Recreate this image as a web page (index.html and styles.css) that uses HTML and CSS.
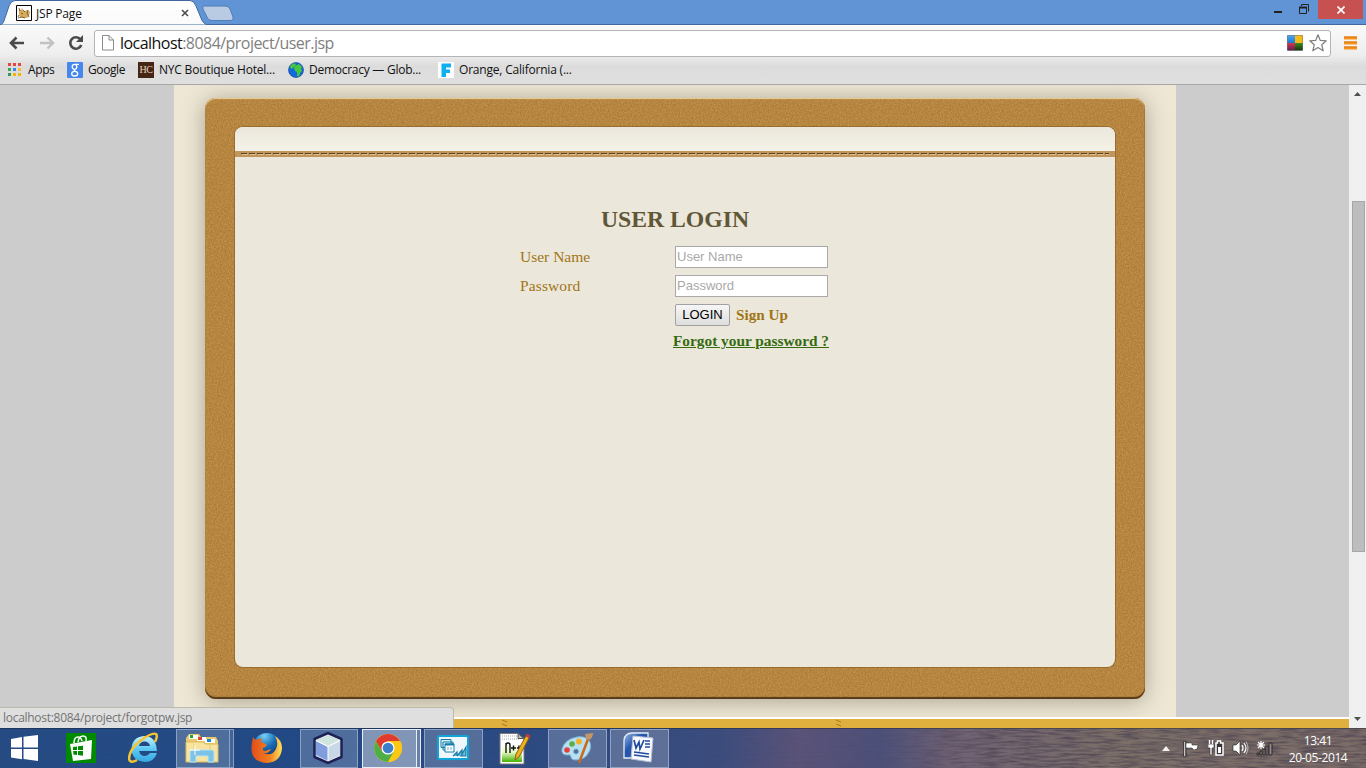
FILE: index.html
```html
<!DOCTYPE html>
<html lang="en">
<head>
<meta charset="utf-8">
<title>JSP Page</title>
<link rel="stylesheet" href="styles.css">
</head>
<body>
<div class="screen">
  <header class="tabstrip">
    <svg class="tab-shapes" width="250" height="25" viewBox="0 0 250 25">
      <defs><linearGradient id="tabg" x2="0" y2="1"><stop stop-color="#fff"/><stop offset="1" stop-color="#fafafa"/></linearGradient></defs>
      <path d="M0 25C4 24 4 20 6 15L9 6Q11 .5 15 .5H190Q194 .5 196 6L201 18Q203 24 208 25Z" fill="url(#tabg)" stroke="#40689f"/>
      <path d="M204 6H225Q229 6 230 9L233 17Q234 20 231 20.500H212Q208 20.500 207 17L203 9Q202 6 204 6Z" fill="#b8cbe2" stroke="#517eb8"/>
    </svg>
    <div class="tab">
      <svg width="16" height="16" viewBox="0 0 16 16"><path d="M.5.500h15v15H.5z" fill="#fff" stroke="#000"/><path d="M3 4l2 1 1-2 2 3 4-1 2 2-1 4-2 2H7l-3-1-1-2z" fill="#d9ab5c"/><path d="M3 3l1 3M7 5l2 2M5 8l2 1M12 5l-1 3 2 4M2 13l4-1 3 1M3 10l-1 2" stroke="#5b4a2b" stroke-width=".8" fill="none"/></svg>
      <span class="tab-title">JSP Page</span>
      <svg class="tab-x" width="8" height="8" viewBox="0 0 8 8"><path d="M1 1l6 6M7 1L1 7" stroke="#4c4c4c" stroke-width="1.600"/></svg>
    </div>
    <div class="window-controls">
      <svg class="min" width="8" height="2"><path d="M0 0h8v2H0z" fill="#222"/></svg>
      <svg class="restore" width="10" height="10" viewBox="0 0 10 10"><path d="M.5 3.500h7v6h-7zM2.500 2V.5h7v7" fill="none" stroke="#222"/><path d="M0 2.500h8v2H0z" fill="#222"/></svg>
      <span class="close"><svg width="8" height="8" viewBox="0 0 8 8"><path d="M.5.500l7 7M7.500.500l-7 7" stroke="#fff" stroke-width="1.700"/></svg></span>
    </div>
  </header>
  <div class="chrome">
    <div class="toolbar">
      <svg width="16" height="14" viewBox="0 0 16 14"><path d="M15 7H2M7.500 1.500L2 7l5.500 5.500" fill="none" stroke="#4b4b4b" stroke-width="2.600"/></svg>
      <svg class="forward" width="16" height="14" viewBox="0 0 16 14"><path d="M1 7h13M8.500 1.500L14 7l-5.500 5.500" fill="none" stroke="#c2c2c2" stroke-width="2.400"/></svg>
      <svg class="reload" width="16" height="16" viewBox="0 0 16 16"><path d="M12.500 4.500A5.700 5.700 0 1 0 13.300 10" fill="none" stroke="#4b4b4b" stroke-width="2.600"/><path d="M15 0v7H8z" fill="#4b4b4b"/></svg>
      <div class="omnibox">
        <svg width="12" height="16" viewBox="0 0 12 16"><path d="M.5.500H7l4.500 4.500v10H.5zM7 .5V5h4.500" fill="#fff" stroke="#8b8b8b"/></svg>
        <span class="url"><b>localhost</b>:8084/project/user.jsp</span>
        <svg class="plugin" width="16" height="16" viewBox="0 0 16 16"><defs><linearGradient id="pa" x2="0" y2="1"><stop stop-color="#4fa4ed"/><stop offset="1" stop-color="#1d78c9"/></linearGradient><linearGradient id="pb" x2="0" y2="1"><stop stop-color="#d83554"/><stop offset="1" stop-color="#66204f"/></linearGradient><linearGradient id="pc" x2="0" y2="1"><stop stop-color="#3c8c22"/><stop offset="1" stop-color="#173e0a"/></linearGradient></defs><rect width="16" height="16" rx="1" fill="#777"/><path d="M.5.500H8V8H.5z" fill="url(#pa)"/><path d="M8 .5h7.500V8H8z" fill="#f5bb16"/><path d="M.5 8H8v7H.5z" fill="url(#pb)"/><path d="M8 8h7.500v7H8z" fill="url(#pc)"/></svg>
        <svg width="18" height="18" viewBox="0 0 18 18"><path d="M9 .8l2.300 5.600 6 .4-4.500 4 1.400 6L9 13.600l-5.200 3.200 1.400-6-4.500-4 6-.4z" fill="#fff" stroke="#7d7d7d" stroke-width="1.200" stroke-linejoin="round"/></svg>
      </div>
      <svg class="menu" width="13" height="14" viewBox="0 0 13 14"><path d="M0 2h13M0 7h13M0 12h13" stroke="#f7941d" stroke-width="3"/><path d="M0 1h13M0 6h13M0 11h13" stroke="#dc7410"/></svg>
    </div>
    <nav class="bookmarks">
      <a class="bm b1"><svg width="13" height="13" viewBox="0 0 13 13"><path d="M0 0h3v3H0zM5 0h3v3H5zM10 0h3v3h-3z" fill="#e8453c"/><path d="M0 5h3v3H0z" fill="#3aa757"/><path d="M5 5h3v3H5z" fill="#3d82f0"/><path d="M10 5h3v3h-3z" fill="#f9bb2d"/><path d="M0 10h3v3H0z" fill="#2f9a51"/><path d="M5 10h3v3H5zM10 10h3v3h-3z" fill="#f5b400"/></svg><span>Apps</span></a>
      <a class="bm b2"><svg width="16" height="16" viewBox="0 0 16 16"><rect width="16" height="16" rx="1" fill="#4787ed"/><ellipse cx="7.500" cy="4.800" rx="2.300" ry="2.500" fill="none" stroke="#fff" stroke-width="1.300"/><ellipse cx="7.700" cy="11.700" rx="3" ry="2.300" fill="none" stroke="#fff" stroke-width="1.300"/><path d="M8 2.300h4M8 7.200q-2 1 .5 2.200" fill="none" stroke="#fff" stroke-width="1.200"/></svg><span>Google</span></a>
      <a class="bm b3"><i class="hc">HC</i><span>NYC Boutique Hotel...</span></a>
      <a class="bm b4"><svg width="16" height="16" viewBox="0 0 16 16"><circle cx="8" cy="8" r="7.500" fill="#1467df"/><path d="M2 4l3-3 3 1-1 2-2 2-2 1zM7 4l4-2 3 3-1 2 1 2-2 2-1 4-2-1V10L7 9 6 6z" fill="#46c83c"/><circle cx="8" cy="8" r="7.500" fill="none" stroke="#134590" stroke-opacity=".6"/></svg><span>Democracy — Glob...</span></a>
      <a class="bm b5"><svg width="16" height="16" viewBox="0 0 16 16"><path d="M0 0h16v16H0z" fill="#fff"/><path d="M3.500 1.500H13v4H8v2h4v3.500H8v4H3.500z" fill="#0fb0f0"/></svg><span>Orange, California (...</span></a>
    </nav>
  </div>
  <div class="viewport">
    <div class="page">
      <div class="page-center">
        <div class="board">
          <svg class="grain" width="940" height="601"><filter id="cork" x="0" y="0" width="100%" height="100%" color-interpolation-filters="sRGB"><feTurbulence type="fractalNoise" baseFrequency=".65" numOctaves="2" seed="3"/><feColorMatrix values=".17 0 0 0 .63  .17 0 0 0 .44  .15 0 0 0 .18  0 0 0 0 1"/></filter><rect width="940" height="601" filter="url(#cork)"/></svg>
          <main class="sheet">
            <div class="sheet-top"></div>
            <div class="stitch"><svg width="868" height="3"><path d="M0 .5h868" stroke="#5c4120" stroke-dasharray="6 2"/><path d="M1 1.500h868" stroke="#dfc28f" stroke-dasharray="6 2"/></svg></div>
            <form class="login">
              <h2>USER LOGIN</h2>
              <label>User Name</label><input type="text" placeholder="User Name">
              <label class="pw">Password</label><input type="password" placeholder="Password">
              <div class="actions"><button type="button">LOGIN</button><a>Sign Up</a></div>
              <a class="forgot">Forgot your password ?</a>
            </form>
          </main>
        </div>
      </div>
      <div class="gold">
        <svg class="m1" width="8" height="8"><path d="M1 1l5 2M1 5l5 2" stroke="#a67a16"/></svg>
        <svg class="m2" width="8" height="8"><path d="M1 1l5 2M1 5l5 2" stroke="#a67a16"/></svg>
      </div>
      <div class="status">localhost:8084/project/forgotpw.jsp</div>
    </div>
    <div class="scrollbar">
      <svg width="7" height="4"><path d="M0 4L3.500 0 7 4z" fill="#505050"/></svg>
      <div class="thumb"></div>
      <svg width="7" height="4"><path d="M0 0h7L3.500 4z" fill="#505050"/></svg>
    </div>
  </div>
  <footer class="taskbar">
    <svg class="wood" width="1366" height="40"><filter id="wood" x="0" y="0" width="100%" height="100%" color-interpolation-filters="sRGB"><feTurbulence type="fractalNoise" baseFrequency=".05 .5" numOctaves="3" seed="8"/><feColorMatrix values="0 0 0 0 .26  0 0 0 0 .23  0 0 0 0 .3  1.500 0 0 0 -.55"/></filter><rect width="1366" height="40" filter="url(#wood)"/></svg>
    <div class="tasks">
      <span class="task start"><svg width="27" height="26" viewBox="0 0 27 26"><path d="M0 4l11-2v10.500H0zM12.500 1.700L27 0v12.500H12.500zM0 14h11v10.200L0 22.500zM12.500 14H27v12l-14.500-2z" fill="#fff"/></svg></span>
      <span class="task store"><svg width="30" height="30" viewBox="0 0 30 30"><path d="M0 0h30v30H0z" fill="#008a00"/><path d="M4 11l22-4-1 19-18 2z" fill="#fff"/><path d="M8 10q0-6 4-6 3 0 4 4M12 9q1-6 5-6 4 0 3 5" fill="none" stroke="#fff" stroke-width="1.500"/><path d="M7 14l4-.5V17H7zM12 13.300l5-.6V17h-5zM7.200 18H11v4l-3.600-.4zM12 18h5v4.700l-5-.6z" fill="#008a00"/></svg></span>
      <span class="task ie"><svg width="31" height="32" viewBox="0 0 31 32"><defs><linearGradient id="ieg" x2="0" y2="1"><stop stop-color="#c9f2ff"/><stop offset=".5" stop-color="#5dc9f3"/><stop offset="1" stop-color="#36a8e2"/></linearGradient></defs><path d="M29 19H11q1 5 6 5 3 0 5-3h7q-3 9-12 9Q4 29 3.500 17 4 5 16 4q12 0 13 15zM11 14h11q-1-4.500-5.500-4.500T11 14z" fill="url(#ieg)"/><path d="M9 28Q2 32 1 27 1 18 12 9 24 0 28 2q2 2-1 8" fill="none" stroke="#f5c531" stroke-width="2.500"/></svg></span>
      <span class="task open explorer"><svg width="34" height="32" viewBox="0 0 34 32"><path d="M1 6l3-4h10l2 3h15l2 4v20H1z" fill="#e7cb6b"/><path d="M4 3h9v4H4z" fill="#fff"/><path d="M5 3h3v3H5z" fill="#18a43a"/><path d="M12 5h9v4h-9z" fill="#fff"/><path d="M13 5h4v3h-4z" fill="#d74632"/><path d="M20 7h10v4H20z" fill="#fff"/><path d="M22 7h4v3h-4z" fill="#2488cf"/><path d="M1 10h17l2 2h13v18H1z" fill="#f7e4a0" stroke="#dcbb5c"/><path d="M9 12v18M25 12v18" stroke="#eacb74"/><path d="M5 30V20q0-2 2-2h20q2 0 2 2v10h-6v-6H11v6z" fill="#7dc3e5" stroke="#b7e5f7"/><path d="M10 13v10M5 18h10" stroke="#fff"/></svg></span><i class="stack"></i>
      <span class="task firefox"><svg width="31" height="32" viewBox="0 0 31 32"><defs><radialGradient id="fx" cx=".4" cy=".1" r=".8"><stop stop-color="#77d0f5"/><stop offset=".5" stop-color="#176eb8"/><stop offset="1" stop-color="#14326e"/></radialGradient><linearGradient id="fo"><stop stop-color="#e04e1b"/><stop offset=".6" stop-color="#f28020"/><stop offset="1" stop-color="#ffe35b"/></linearGradient></defs><circle cx="16" cy="15" r="14" fill="url(#fx)"/><path d="M2 5q1 2 3 3l6-2-1 4 5 2q2 2-3 4-1 3 2 3l6-2q-2 5-8 4 9 4 13-4 3-6-1-13 7 4 7 12-1 14-15 15Q0 30 .5 16 1 9 2 5z" fill="url(#fo)"/></svg></span>
      <span class="task open netbeans"><svg width="32" height="32" viewBox="0 0 32 32"><path d="M16 1l13.500 6v18L16 31 2.500 25V7z" fill="#e5edf4" stroke="#1d2156" stroke-width="2.500" stroke-linejoin="round"/><path d="M4 8l12-5 12 5-12 6z" fill="#d0e4df"/><path d="M4 9l12 6v14L4 23z" fill="#809ddd"/><path d="M28 9l-12 6v14l12-6z" fill="#c9d8e6"/><path d="M4 8.500l12 6 12-6M16 15v14" stroke="#fff" fill="none"/></svg></span>
      <span class="task open active"><svg width="30" height="30" viewBox="0 0 30 30"><circle cx="15" cy="15" r="14" fill="#fbc814"/><path d="M15 8h12.100A14 14 0 0 0 2.900 8L9 18.500z" fill="#e13a2f"/><path d="M2.900 8A14 14 0 0 0 15 29l6-10.500-12 0z" fill="#4eae48"/><path d="M15 8h12.100A14 14 0 0 1 15 29l6.100-10.500z" fill="#fbc814"/><circle cx="15" cy="15" r="6.600" fill="#fff"/><circle cx="15" cy="15" r="5.300" fill="#3b7fc8"/></svg></span><i class="stack bright"></i>
      <span class="task open settings"><svg width="32" height="26" viewBox="0 0 32 26"><rect x="1" y="1" width="30" height="23" rx="1" fill="#edf7fc" stroke="#12a3d7" stroke-width="2"/><path d="M4 4.500h10v8H4zM6 7h10v8H6z" fill="#d3ecf6" stroke="#167da8"/><path d="M8 9h9v8H8z" fill="#fff" stroke="#167da8"/><path d="M8 9.500h9" stroke="#167da8" stroke-width="2"/><path d="M11 12v3M14 12v3" stroke="#65aecb"/><path d="M16 21l4-4v4M20 21l5-6v6M24 21l5-9v9z" fill="#6fb6d2" stroke="#167da8" stroke-width="1.200"/></svg></span>
      <span class="task notepad"><svg width="32" height="34" viewBox="0 0 32 34"><defs><linearGradient id="ng" x2="0" y2="1"><stop stop-color="#fff"/><stop offset=".45" stop-color="#e5fac4"/><stop offset="1" stop-color="#45b100"/></linearGradient></defs><path d="M1 1.500h18l6 5V32H1z" fill="#fff" stroke="#777"/><path d="M3 12h20v18H3z" fill="url(#ng)"/><path d="M3 4h15M3 7h17" stroke="#9ca4ad" stroke-dasharray="1 1"/><path d="M19 1.500v5h6z" fill="#bbb" stroke="#555"/><path d="M7 21V11M7 13q0-2 2-2t2 2v8M12 16h5M14.500 13.500v5M18 16h4M20 13.500v5" fill="none" stroke="#111" stroke-width="1.400"/><path d="M28 2l3 2-11 21-4 3 1-6z" fill="#efb319" stroke="#8d601d"/><path d="M27 3l4 2" stroke="#b83942" stroke-width="3"/></svg></span>
      <span class="task open paint"><svg width="32" height="32" viewBox="0 0 32 32"><path d="M16 5C29 3 32 13 28 20q-4 8-13 8-5 0-5-3 0-3-4-2-6 0-5-6Q4 7 16 5zM15 17a2.500 2.500 0 1 0 .1 0z" fill="#b8dff2" stroke="#75b3d6" fill-rule="evenodd"/><circle cx="6" cy="18" r="2.800" fill="#e0413c"/><circle cx="11" cy="12" r="2.800" fill="#5bb146"/><circle cx="18" cy="9.500" r="3" fill="#f3b12d"/><path d="M27 7L18 31" stroke="#c66b20" stroke-width="2.600"/><path d="M24 2l8-1q0 5-4 7l-3-1z" fill="#c69566"/></svg></span>
      <span class="task open word"><svg width="32" height="32" viewBox="0 0 32 32"><defs><linearGradient id="wg" x2="1" y2="1"><stop stop-color="#9bb9e7"/><stop offset=".4" stop-color="#2656ab"/><stop offset="1" stop-color="#2d58a7"/></linearGradient></defs><path d="M2 27V9q1-7 8-7h16v25z" fill="url(#wg)" stroke="#e2edfb" stroke-width="1.300"/><path d="M11 5l20 2-2 24-20-3z" fill="#f8faff" stroke="#b5c0d4"/><path d="M12 9l2 8 3-6 1 7 4-9M23 10h5M23 13h5M23 16h5M12 21l15 2M12 24l15 2" fill="none" stroke="#204b9c" stroke-width="1.700"/></svg></span>
    </div>
    <div class="tray">
      <svg width="8" height="5" viewBox="0 0 8 5"><path d="M0 5l4-5 4 5z" fill="#f3f1f0"/></svg>
      <svg class="flag" width="17" height="17" viewBox="0 0 17 17"><path d="M.5 1h3v16h-3z" fill="#333"/><path d="M1 1.500h1.500v15H1zM3 3h6v2h6l-1 4-3 1-2-2H3z" fill="#fff" stroke="#222" stroke-width=".5"/></svg>
      <svg class="battery" width="16" height="16" viewBox="0 0 16 16"><path d="M0 4h6v4H4v7H2V8H0z" fill="#fff" stroke="#222" stroke-width=".6"/><path d="M1.500 0v4M4.500 0v4" stroke="#fff" stroke-width="1.400"/><path d="M8 3h1.500V1h3v2H15v12H8z" fill="#3a3232" stroke="#fff" stroke-width="1.500"/><path d="M10 7h3v6h-3z" fill="#fff"/></svg>
      <svg class="sound" width="17" height="16" viewBox="0 0 17 16"><path d="M1 5h3l4-4v14l-4-4H1z" fill="#fff" stroke="#222" stroke-width=".6"/><path d="M10 5q2 3 0 6M12 3q4 5 0 10" fill="none" stroke="#fff" stroke-width="1.200"/><path d="M14 1.500q4 6.500 0 13" fill="none" stroke="#bdb6b7"/></svg>
      <svg class="signal" width="17" height="15" viewBox="0 0 17 15"><path d="M1 12h2v2H1zM4 10h2v4H4zM7 8h2v6H7zM10 5h2v9h-2zM13 2h3v12h-3z" fill="#8f8888" stroke="#2f292d"/><path d="M5 0v8M1 4h8M2 1l6 6M8 1L2 7" stroke="#fff" stroke-width="1.200"/></svg>
      <div class="clock"><span class="time">13:41</span><span class="date">20-05-2014</span></div>
    </div>
  </footer>
</div>
</body>
</html>
```
FILE: styles.css
```css
* { box-sizing: border-box; }
body { margin: 0; overflow: hidden; font-family: "Open Sans", "Noto Sans", sans-serif; }
svg { display: block; flex: none; }
.screen { width: 1366px; height: 768px; display: flex; flex-direction: column; overflow: hidden; }

.tabstrip { height: 25px; flex: none; background: #6194d5; border-bottom: 1px solid #40689f; display: flex; justify-content: space-between; position: relative; }
.tab-shapes { position: absolute; left: 0; top: 0; }
.tab { position: relative; display: flex; align-items: center; width: 200px; height: 26px; padding-left: 16px; font-size: 12px; color: #111; }
.tab-title { margin-left: 4px; letter-spacing: -.2px; width: 145px; white-space: nowrap; }
.window-controls { display: flex; align-items: flex-start; }
.min { margin: 11px 17px 0 0; }
.restore { margin: 4px 9px 0 0; }
.close { width: 45px; height: 19px; margin-right: 3px; background: #c75050; display: flex; align-items: center; justify-content: center; }

.chrome { height: 60px; flex: none; background: linear-gradient(#fafafa, #eee 50%, #dcdcdc 70%, #dfdfdf); border-bottom: 1px solid #a9a6a3; }
.toolbar { height: 35px; display: flex; align-items: center; padding-left: 9px; }
.forward { margin-left: 14px; }
.reload { margin-left: 13px; }
.omnibox { width: 1237px; height: 27px; margin-left: 10px; margin-top: 1px; background: #fff; border: 1px solid #b4b4b4; border-radius: 3px; display: flex; align-items: center; padding: 0 3px 0 7px; }
.url { margin-left: 6px; width: 230px; font-size: 16px; letter-spacing: -.54px; color: #808080; white-space: nowrap; }
.url b { font-weight: 400; color: #111; }
.plugin { margin-left: auto; margin-right: 6px; }
.menu { margin-left: 13px; }
.bookmarks { height: 24px; display: flex; align-items: center; padding: 0 0 5px 8px; font-size: 12px; color: #111; }
.bm { display: flex; align-items: center; white-space: nowrap; height: 18px; }
.bm span { letter-spacing: -.4px; }
.b1 { width: 59px; gap: 7px; }
.b2 { width: 71px; gap: 5px; }
.b3 { width: 150px; gap: 5px; }
.b4 { width: 150px; gap: 5px; }
.b5 { gap: 5px; }
.b3 span, .b5 span { letter-spacing: -.2px; }
.b4 span { letter-spacing: -.26px; }
.hc { width: 16px; height: 16px; background: #452514; color: #e6d2bd; font: 10px/16px "Liberation Serif", serif; text-align: center; letter-spacing: -.5px; }

.viewport { height: 643px; flex: none; display: flex; }
.page { width: 1349px; background: #ccc; display: flex; flex-direction: column; position: relative; }
.page-center { width: 1002px; height: 632px; margin-left: 174px; background: #eee7d5; padding: 13px 31px 0; overflow: hidden; }
.board { position: relative; height: 601px; padding: 29px 30px 32px; border-radius: 11px; background: #b68540; box-shadow: 0 2px 22px rgba(73, 67, 45, .42); }
.board::after { content: ""; position: absolute; inset: 0; border-radius: 11px; pointer-events: none; box-shadow: inset 0 -2px 1px #553918, inset 0 1px 1px #ecd09a, inset -1px 0 #a77534; }
.grain { position: absolute; left: 0; top: 0; clip-path: inset(0 round 11px); }
.sheet { position: relative; height: 540px; background: #ebe7db; border-radius: 8px; overflow: hidden; box-shadow: 0 0 0 1px rgba(130, 88, 37, .55); }
.sheet-top { height: 24px; background: linear-gradient(#ebe7db, #f4f2e8); }
.stitch { height: 6px; background: #c1965d; padding: 2px 6px 0; }
.login { width: 310px; margin: 48px auto 0; display: grid; grid-template-columns: 154px 156px; grid-template-rows: 37px 29px 29px 29px 24px; align-items: center; font: 15.500px/20px "Liberation Serif", serif; color: #a07516; }
.login h2 { grid-column: 1 / 3; margin: 0; align-self: start; text-align: center; font-size: 23.700px; line-height: 28px; color: #5f5738; }
.login .pw { letter-spacing: .12px; }
.login input { width: 153px; height: 22px; border: 1px solid #a9a9a9; padding: 1px; margin: 0 0 0 1px; background: #fff; font: 13px "Liberation Sans", sans-serif; }
.login input::placeholder { color: #a9a9a9; }
.actions { grid-column: 2; display: flex; align-items: center; gap: 6px; margin-left: 1px; font-weight: 700; font-size: 15.200px; }
.actions button { width: 55px; height: 22px; padding: 0; border: 1px solid #a1a1a1; border-radius: 2px; background: linear-gradient(#f6f6f6, #dedede); font: 13px "Liberation Sans", sans-serif; color: #000; }
.forgot { grid-column: 2; margin-left: -1px; font-weight: 700; font-size: 15.330px; white-space: nowrap; color: #356b10; text-decoration: underline; }
.gold { height: 11px; background: #e0b03f; border-top: 2px solid #fff; display: flex; align-items: flex-start; }
.m1 { margin-left: 501px; }
.m2 { margin-left: 326px; }
.status { position: absolute; left: 0; bottom: 0; width: 454px; height: 21px; border: 1px solid #bdb9ad; border-width: 1px 1px 0 0; border-radius: 0 4px 0 0; background: #dfdfdf; padding-left: 3px; font-size: 12px; line-height: 20px; letter-spacing: -.28px; color: #737373; }
.scrollbar { width: 17px; background: #f0f0f0; display: flex; flex-direction: column; align-items: center; padding: 7px 0; }
.thumb { width: 13px; height: 351px; margin: 105px 0 auto 2px; background: #bdbdbd; border: 1px solid #a6a6a6; }

.taskbar { position: relative; height: 40px; flex: none; display: flex; justify-content: space-between; overflow: hidden; background: linear-gradient(90deg, #264c85 0, #214a87 300px, #304b82 600px, #3c4d7e 720px, #5b5379 800px, #4c507a 880px, #6e6173 950px, #7c6f68 1120px, #7b6c68 1366px); box-shadow: inset 0 1px rgba(20, 30, 50, .45); }
.wood { position: absolute; left: 0; top: 0; -webkit-mask-image: linear-gradient(90deg, rgba(0,0,0,.12) 0, rgba(0,0,0,.15) 880px, #000 1000px); mask-image: linear-gradient(90deg, rgba(0,0,0,.12) 0, rgba(0,0,0,.15) 880px, #000 1000px); }
.tasks { position: relative; display: flex; padding-left: 11px; }
.task { display: flex; height: 39px; align-items: center; justify-content: center; margin-top: 1px; }
.start { width: 27px; padding-bottom: 2px; }
.store { width: 30px; margin-left: 28px; padding-bottom: 1px; }
.ie { width: 31px; margin-left: 32px; padding-bottom: 2px; }
.open { width: 59px; border: 1px solid rgba(178, 197, 221, .6); background: rgba(255, 255, 255, .2); padding-bottom: 1px; }
.explorer { width: 54px; margin-left: 17px; padding-right: 2px; }
.stack { width: 4px; height: 39px; margin: 1px 0 0; border: 1px solid rgba(178, 197, 221, .6); border-left: 0; background: rgba(255, 255, 255, .15); }
.firefox { width: 31px; margin-left: 17px; padding-bottom: 1px; }
.netbeans { margin-left: 18px; width: 58px; padding-right: 2px; }
.active { width: 55px; margin-left: 4px; padding-right: 3px; background: rgba(255, 255, 255, .42); border-color: #e9eef5; }
.bright { border-color: #e9eef5; background: rgba(255, 255, 255, .3); }
.settings { margin-left: 3px; padding-right: 2px; }
.notepad { width: 32px; margin-left: 16px; }
.paint { margin-left: 17px; padding-right: 2px; }
.word { margin-left: 3px; padding-right: 3px; padding-bottom: 3px; }
.tray { position: relative; display: flex; align-items: center; padding-right: 17px; color: #fff; }
.flag { margin-left: 13px; }
.battery { margin-left: 8px; }
.sound { margin-left: 8px; }
.signal { margin-left: 7px; }
.clock { width: 62px; margin-left: 14px; display: flex; flex-direction: column; align-items: center; font-size: 12px; line-height: 17px; letter-spacing: -.4px; white-space: nowrap; padding-top: 2px; }
```
